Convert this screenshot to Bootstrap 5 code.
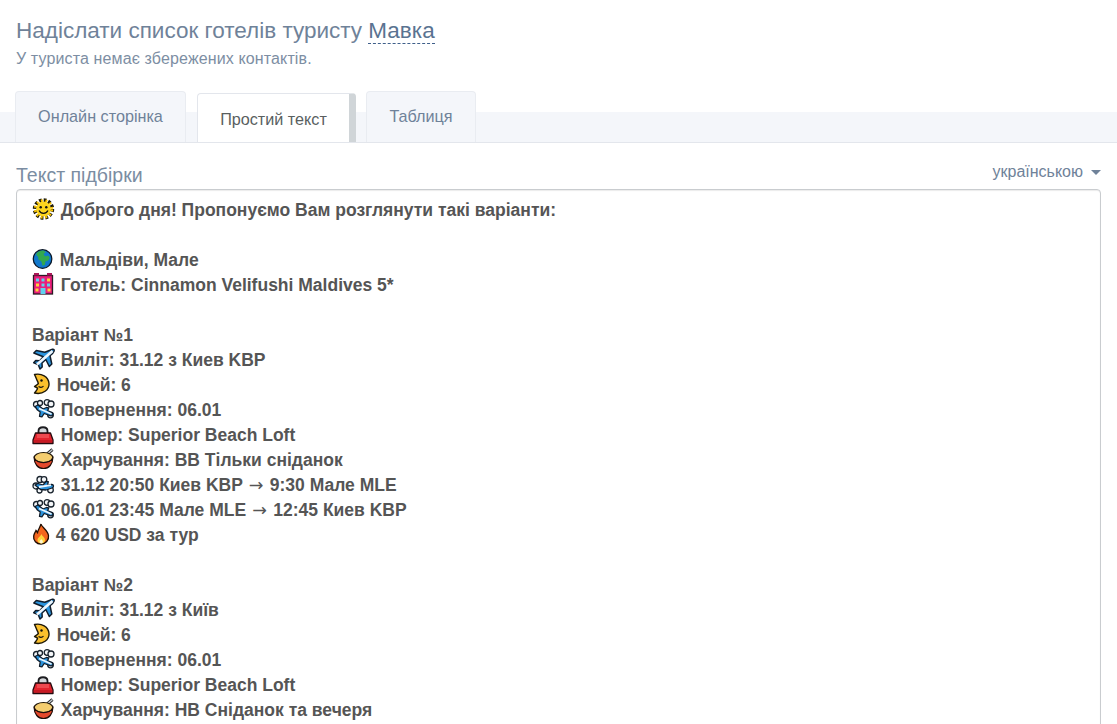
<!DOCTYPE html>
<html lang="uk">
<head>
<meta charset="utf-8">
<title>Надіслати список готелів</title>
<link href="https://cdn.jsdelivr.net/npm/bootstrap@5.3.0/dist/css/bootstrap.min.css" rel="stylesheet">
<style>
html,body{height:724px;overflow:hidden;background:#fff;}
body{font-family:"Liberation Sans",Arial,sans-serif;color:#6f8299;}
.head-zone{padding:17px 16px 0;height:91px;}
.send-title{font-size:22.5px;line-height:28px;margin:0;font-weight:400;color:#6f8299;}
.send-name{color:#5a7391;border-bottom:1px dashed #3f5f8a;}
.send-sub{font-size:16px;line-height:20px;margin:4px 0 0;color:#7d8ea3;letter-spacing:.13px;}
.tabs-zone{height:52px;border-bottom:1px solid #e3e6ec;background:linear-gradient(#fff 21px,#f4f6fa 21px);padding-left:15px;align-items:flex-end;}
.tab-item{height:51px;background:#f4f6fa;border:1px solid #e9ecf1;border-bottom:0;border-radius:4px 4px 0 0;font-size:16.2px;line-height:49px;color:#6f8299;text-align:center;}
.tab-one{width:171px;margin-right:11px;}
.tab-two{width:159px;height:49px;background:#fff;color:#5a5f5f;border-color:#e3e6ec;border-right:7px solid #d0d5d8;line-height:50px;margin-right:10px;}
.tab-three{width:110px;}
.text-zone{padding:18px 16px 0;}
.label-row{height:29px;}
.text-label{font-size:19.5px;line-height:28px;color:#7b8da2;}
.lang-pick{font-size:16px;line-height:22px;color:#6f8299;}
.lang-caret{display:inline-block;margin-left:8px;margin-bottom:2px;border-top:5px solid #6f8299;border-left:5px solid transparent;border-right:5px solid transparent;}
.text-box{border:1px solid #c9cccf;border-radius:4px;height:600px;padding:8px 15px;font-size:17.5px;line-height:25px;font-weight:700;color:#555;box-shadow:inset 0 1px 1px rgba(0,0,0,.08);margin-top:-1px;}
.text-box div{height:25px;white-space:pre;}
.emo{vertical-align:-4px;height:22px;display:inline-block;}
.arrow-glyph{font-family:"DejaVu Sans",sans-serif;font-weight:400;margin:0 1.4px;line-height:1;}
</style>
</head>
<body>
<svg width="0" height="0" class="position-absolute">
<defs>
<symbol id="sun" viewBox="0 0 24 22">
<circle cx="11.500" cy="11" r="8.800" fill="none" stroke="#1d1a08" stroke-width="3.800" stroke-dasharray="2.700 1.900"/>
<circle cx="11.500" cy="11" r="8.500" fill="none" stroke="#fbc400" stroke-width="2.400" stroke-dasharray="1.900 2.700" stroke-dashoffset="-.4"/>
<circle cx="11.500" cy="11" r="7.400" fill="#fdd51e"/>
<circle cx="8.700" cy="9.200" r="1.200" fill="#111"/><circle cx="14.300" cy="9.200" r="1.200" fill="#111"/>
<path d="M7.100 12.600c1.400 3.600 7.400 3.600 8.800 0" fill="none" stroke="#111" stroke-width="1.300"/>
</symbol>
<symbol id="globe" viewBox="0 0 24 22">
<circle cx="11" cy="11" r="9.700" fill="#1178cc" stroke="#0a1626" stroke-width="1.300"/>
<path d="M4.500 5.500c2-2.500 5-3.500 8-3.200l2 1.600-2.500 2 1.500 2.200 3.500-.6 1.500 2-1.500 3-3 1-.5 3.500-2.500 1-1.200-4.500-3-2-.5-3-1.300-1z" fill="#32a84e"/>
</symbol>
<symbol id="hotel" viewBox="0 0 24 22">
<rect x="1.500" y="2.500" width="19" height="18.500" fill="#ea1d7b" stroke="#2c1a24" stroke-width="1.300"/>
<rect x="4" y="5.500" width="3" height="3" fill="#5fd2ee"/><rect x="9.500" y="5.500" width="3" height="3" fill="#5fd2ee"/><rect x="15" y="5.500" width="3" height="3" fill="#ffd23c"/>
<rect x="4" y="10.500" width="3" height="3" fill="#ffd23c"/><rect x="9.500" y="10.500" width="3" height="3" fill="#5fd2ee"/><rect x="15" y="10.500" width="3" height="3" fill="#5fd2ee"/>
<rect x="3.500" y="15.500" width="3" height="3" fill="#ffd23c"/><rect x="8.500" y="15" width="5" height="6" fill="#5fd2ee"/><rect x="15.500" y="15.500" width="3" height="3" fill="#ffd23c"/>
<path d="M2 0h5v2.500H2zM15 0h5v2.500h-5z" fill="#a81858"/>
</symbol>
<symbol id="plane" viewBox="0 0 24 22">
<path d="M20.500 1.200c1.500-.2 2 .7 1.500 2-.4 1.200-2 3-4 4.400l1.800 8.400-2.500 2.500-3.500-7-3.800 3.500.2 4-2.200 2-1.800-4.500-4.500-1.800 2-2.200 4 .2 3.600-4L1.800 5l2.500-2.500 8.500 1.800z" fill="#2a93dc" stroke="#101c2a" stroke-width="1.500" stroke-linejoin="round"/>
<path d="M5 16.500L20.500 3" stroke="#eef7ff" stroke-width="2.600" fill="none"/>
</symbol>
<symbol id="moon" viewBox="0 0 20 22">
<path d="M2.500 1.500c7-1.500 14 2 14.500 9 .4 6-6 11.500-14.500 9.500 1.800-2 3-3.500 3-4.700-.8-1-2-1.500-3-1.800 1.500-1 3-1.600 3.800-2.800-.2-.8-.2-1-.5-2C4.500 7 3.800 3.500 2.500 1.500z" fill="#fbc02d" stroke="#1d1808" stroke-width="1.400" stroke-linejoin="round"/>
<circle cx="9.500" cy="7.500" r="1.200" fill="#111"/><path d="M6.500 13.500c2 1.300 3.800 1 5-.5" fill="none" stroke="#111" stroke-width="1.200"/>
</symbol>
<symbol id="depart" viewBox="0 0 24 22">
<g fill="#f4f6f8" stroke="#18222c" stroke-width="1.300">
<circle cx="4.500" cy="6.500" r="3"/><circle cx="8" cy="5" r="2.500"/>
<circle cx="15" cy="4.500" r="2.800"/><circle cx="19" cy="6" r="3"/>
<circle cx="18.500" cy="17" r="2.800"/>
</g>
<path d="M3 8.500l3-1.500 5 4 3.500-1.500 2.200.5-1 2.500 4.500 2.300c1.500 1.200.6 3.300-1.500 3l-6.500-2.300-2.300 3.300-2.400-.4.700-4.400L5.500 12z" fill="#2a93dc" stroke="#101c2a" stroke-width="1.300" stroke-linejoin="round"/>
<path d="M7 10.500l12.500 5.500" stroke="#eef7ff" stroke-width="1.800"/>
</symbol>
<symbol id="bed" viewBox="0 0 24 22">
<path d="M6.500 10.500V8c0-5 9-5 9 0v2.500" fill="#d4d7da" stroke="#1c1c20" stroke-width="1.800"/>
<path d="M3.500 10h15l2.500 7v3.500H1V17z" fill="#e3242e" stroke="#240a0e" stroke-width="1.300" stroke-linejoin="round"/>
<rect x="5" y="11" width="12" height="4" fill="#ef4a50"/>
<path d="M1.500 18h19" stroke="#b4131d" stroke-width="1.200"/>
</symbol>
<symbol id="bowl" viewBox="0 0 22 22">
<path d="M12.500 7.500L19.500 1.500" stroke="#222" stroke-width="3"/><path d="M12.500 7.500L19.500 1.500" stroke="#c3c9ce" stroke-width="1.500"/>
<ellipse cx="10.500" cy="9.500" rx="9.300" ry="5" fill="#f4cd6f" stroke="#1c1408" stroke-width="1.200"/>
<path d="M1.200 10c0 6 3.700 10.500 9.300 10.500s9.300-4.500 9.300-10.500c-2 3.600-5 4.600-9.300 4.600S3.200 13.600 1.200 10z" fill="#e54a2c" stroke="#1f0f0a" stroke-width="1.200"/>
</symbol>
<symbol id="arrive" viewBox="0 0 24 22">
<g fill="#f4f6f8" stroke="#18222c" stroke-width="1.300">
<circle cx="8" cy="6.500" r="3"/><circle cx="12" cy="6.500" r="2.800"/>
<circle cx="4" cy="13" r="3"/><circle cx="7.500" cy="17.500" r="2.500"/>
<circle cx="18.500" cy="17" r="2.800"/>
</g>
<path d="M3 12l3-1.500 5 1.500 3-3.500 2.300.2-.8 3.800 4-1c2.300-.2 2.800 2.700.5 3.500l-6 2-5.500-.5z" fill="#2a93dc" stroke="#101c2a" stroke-width="1.300" stroke-linejoin="round"/>
<path d="M7 14l12-1.800" stroke="#eef7ff" stroke-width="1.800"/>
</symbol>
<symbol id="fire" viewBox="0 0 18 22">
<path d="M8.500 1c.5 3 6.500 6 7.500 11.500.7 4.700-3 8.500-7.500 8.500S.5 17.500 1.200 13c.3-2.500 1.800-4 2.300-5.500.8 1 1 1.800 1.500 2.200C5.500 6.500 7.800 4 8.500 1z" fill="#f4661e" stroke="#1f0e04" stroke-width="1.300"/>
<path d="M8.800 11c.8 2 3.700 3.500 3.700 6 0 2-1.700 3.500-3.700 3.500S5 19 5 17c0-2.300 3-3.500 3.800-6z" fill="#ffd23c"/>
<path d="M8.800 16c.6 1 1.600 1.600 1.600 2.800 0 1-.7 1.700-1.600 1.700s-1.700-.7-1.700-1.700c0-1.200 1.200-1.800 1.700-2.800z" fill="#fff6cf"/>
</symbol>
</defs>
</svg>

<div class="head-zone">
  <h1 class="send-title">Надіслати список готелів туристу <span class="send-name">Мавка</span></h1>
  <p class="send-sub">У туриста немає збережених контактів.</p>
</div>

<div class="tabs-zone d-flex">
  <div class="tab-item tab-one">Онлайн сторінка</div>
  <div class="tab-item tab-two">Простий текст</div>
  <div class="tab-item tab-three">Таблиця</div>
</div>

<div class="text-zone">
  <div class="label-row d-flex justify-content-between align-items-start">
    <span class="text-label">Текст підбірки</span>
    <span class="lang-pick">українською<span class="lang-caret"></span></span>
  </div>
  <div class="text-box overflow-hidden">
<div><svg class="emo" width="24"><use href="#sun"/></svg> Доброго дня! Пропонуємо Вам розглянути такі варіанти:</div>
<div></div>
<div><svg class="emo" width="23"><use href="#globe"/></svg> Мальдіви, Мале</div>
<div><svg class="emo" width="24"><use href="#hotel"/></svg> Готель: Cinnamon Velifushi Maldives 5*</div>
<div></div>
<div>Варіант №1</div>
<div><svg class="emo" width="24"><use href="#plane"/></svg> Виліт: 31.12 з Киев KBP</div>
<div><svg class="emo" width="20"><use href="#moon"/></svg> Ночей: 6</div>
<div><svg class="emo" width="24"><use href="#depart"/></svg> Повернення: 06.01</div>
<div><svg class="emo" width="24"><use href="#bed"/></svg> Номер: Superior Beach Loft</div>
<div><svg class="emo" width="24"><use href="#bowl"/></svg> Харчування: BB Тільки сніданок</div>
<div><svg class="emo" width="24"><use href="#arrive"/></svg> 31.12 20:50 Киев KBP <span class="arrow-glyph">→</span> 9:30 Мале MLE</div>
<div><svg class="emo" width="24"><use href="#depart"/></svg> 06.01 23:45 Мале MLE <span class="arrow-glyph">→</span> 12:45 Киев KBP</div>
<div><svg class="emo" width="19"><use href="#fire"/></svg> 4 620 USD за тур</div>
<div></div>
<div>Варіант №2</div>
<div><svg class="emo" width="24"><use href="#plane"/></svg> Виліт: 31.12 з Київ</div>
<div><svg class="emo" width="20"><use href="#moon"/></svg> Ночей: 6</div>
<div><svg class="emo" width="24"><use href="#depart"/></svg> Повернення: 06.01</div>
<div><svg class="emo" width="24"><use href="#bed"/></svg> Номер: Superior Beach Loft</div>
<div><svg class="emo" width="24"><use href="#bowl"/></svg> Харчування: HB Сніданок та вечеря</div>
  </div>
</div>
<script src="https://cdn.jsdelivr.net/npm/bootstrap@5.3.0/dist/js/bootstrap.bundle.min.js"></script>
</body>
</html>
